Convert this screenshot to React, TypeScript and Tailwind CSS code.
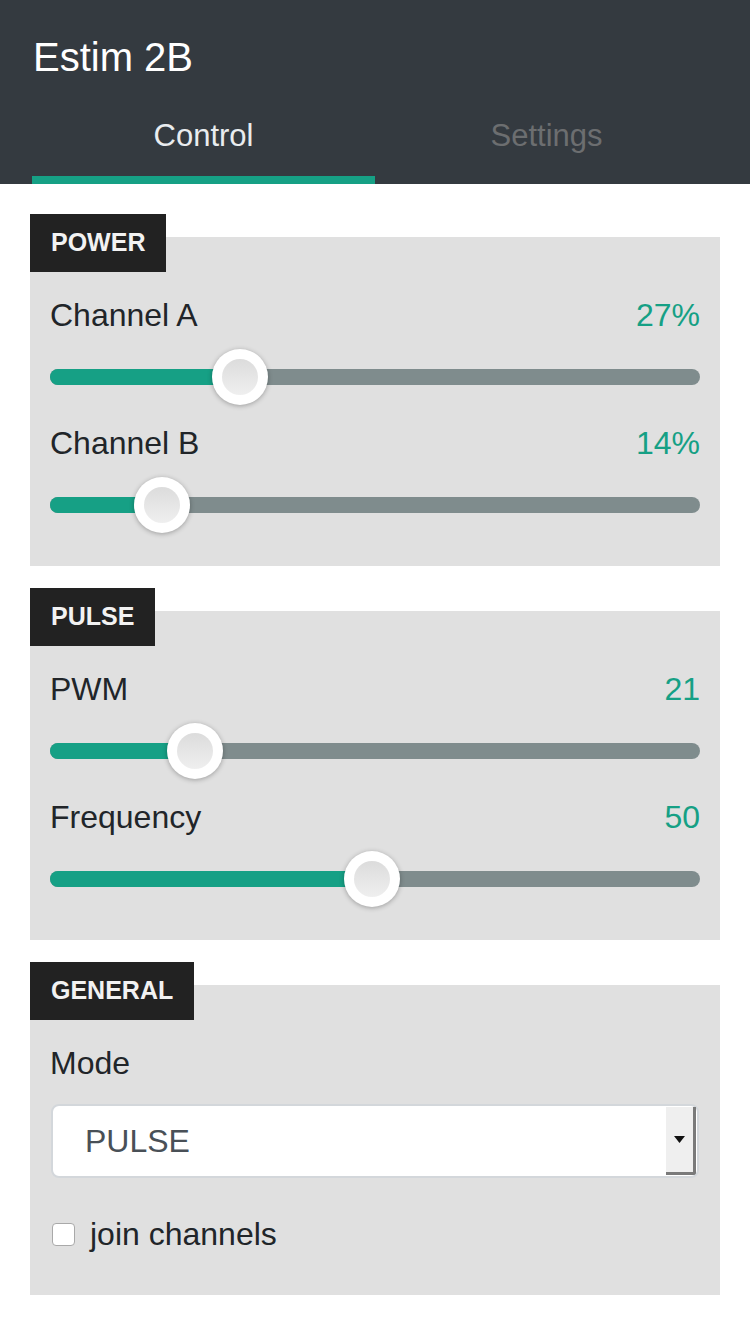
import React from 'react';

const FONT = { fontFamily: '"Liberation Sans", Arial, sans-serif' };

type SliderItem = { label: string; value: string; pos: number };

const Slider: React.FC<{ pos: number }> = ({ pos }) => (
  <div className="relative h-[56px] flex items-center">
    <div className="w-full h-[16px] rounded-full bg-[#7f8c8d] overflow-hidden">
      <div
        className="h-full bg-[#16a085]"
        style={{ width: `calc(28px + ${pos} * (100% - 56px))` }}
      />
    </div>
    <div
      className="absolute top-0 w-[56px] h-[56px] rounded-full bg-white shadow-[0_1px_5px_rgba(0,0,0,0.3)] flex items-center justify-center"
      style={{ left: `calc(${pos} * (100% - 56px))` }}
    >
      <div className="w-[36px] h-[36px] rounded-full bg-gradient-to-b from-[#dcdcdc] to-[#efefef]" />
    </div>
  </div>
);

const Section: React.FC<{ title: string; children: React.ReactNode; pb?: string }> = ({
  title,
  children,
  pb = 'pb-[33px]',
}) => (
  <div className="mx-[30px]">
    <div className="relative z-10 inline-flex items-center h-[58px] px-[21px] bg-[#222222] text-[#f2f2f2] font-bold text-[25px]">
      {title}
    </div>
    <div className={`-mt-[35px] pt-[59px] px-[20px] bg-[#e0e0e0] ${pb}`}>{children}</div>
  </div>
);

const SliderRows: React.FC<{ items: SliderItem[] }> = ({ items }) => (
  <>
    {items.map((it, idx) => (
      <div key={it.label} className={idx > 0 ? 'mt-[19px]' : ''}>
        <div className="flex items-center justify-between h-[38px] text-[32px] text-[#212529]">
          <span>{it.label}</span>
          <span className="text-[#16a085]">{it.value}</span>
        </div>
        <div className="mt-[15px]">
          <Slider pos={it.pos} />
        </div>
      </div>
    ))}
  </>
);

export default function App() {
  const power: SliderItem[] = [
    { label: 'Channel A', value: '27%', pos: 0.273 },
    { label: 'Channel B', value: '14%', pos: 0.141 },
  ];
  const pulse: SliderItem[] = [
    { label: 'PWM', value: '21', pos: 0.197 },
    { label: 'Frequency', value: '50', pos: 0.495 },
  ];

  return (
    <div className="w-[750px] min-h-[1334px] bg-white" style={FONT}>
      {/* header */}
      <div className="bg-[#343a40]">
        <div className="h-[96px] pt-[33px] pl-[33px] text-[40px] leading-[48px] text-white">Estim 2B</div>
        <div className="mx-[32px] grid grid-cols-2">
          <div className="flex flex-col">
            <div className="h-[80px] flex items-center justify-center text-[31px] text-[#e9ecef]">Control</div>
            <div className="h-[8px] bg-[#16a085]" />
          </div>
          <div className="flex flex-col">
            <div className="h-[80px] flex items-center justify-center text-[31px] text-[#6c6e70]">Settings</div>
            <div className="h-[8px]" />
          </div>
        </div>
      </div>

      <div className="pt-[30px] flex flex-col gap-[22px] pb-[40px]">
        <Section title="POWER">
          <SliderRows items={power} />
        </Section>

        <Section title="PULSE">
          <SliderRows items={pulse} />
        </Section>

        <Section title="GENERAL" pb="pb-[42px]">
          <div className="flex items-center h-[38px] text-[32px] text-[#212529]">Mode</div>
          <div className="mt-[22px] mx-px h-[74px] rounded-[8px] border-2 border-[#d3d7db] bg-white flex items-stretch">
            <div className="flex-1 flex items-center pl-[32px] text-[32px] text-[#495057]">PULSE</div>
            <div className="my-[1px] mr-[1px] w-[30px] bg-[#efefef] border-r-[3px] border-b-[3px] border-[#7a7a7a] rounded-br-[3px] flex items-center justify-center">
              <svg width="11" height="7" viewBox="0 0 11 7">
                <path d="M0 0 L11 0 L5.5 7 Z" fill="#111" />
              </svg>
            </div>
          </div>
          <div className="mt-[37px] flex items-center h-[38px]">
            <span className="ml-[2px] w-[23px] h-[23px] rounded-[4px] border border-[#a9a9a9] bg-white" />
            <span className="ml-[15px] text-[32px] text-[#212529]">join channels</span>
          </div>
        </Section>
      </div>
    </div>
  );
}
